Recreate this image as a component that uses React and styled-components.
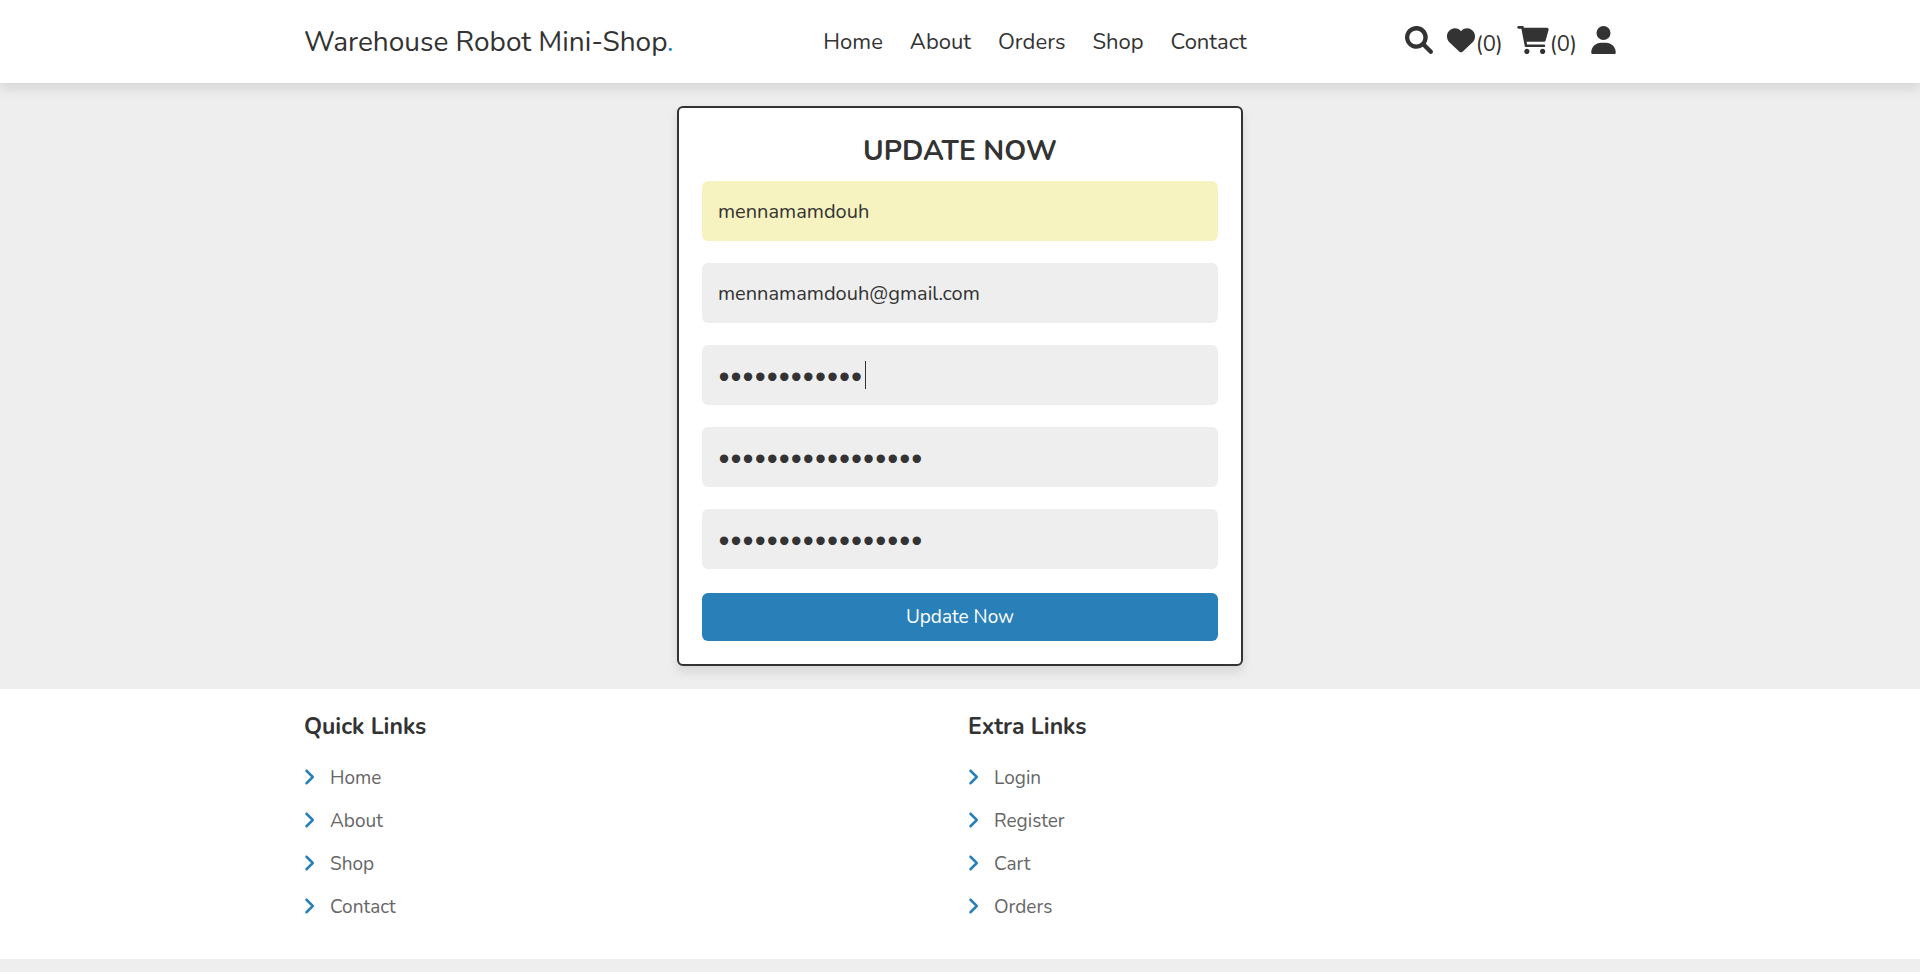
import React from "react";
import styled, { createGlobalStyle } from "styled-components";
import { FaHeart, FaUser } from "react-icons/fa6";

const GlobalStyle = createGlobalStyle`
  * { box-sizing: border-box; margin: 0; padding: 0; }
  body {
    background: #eee;
    color: #333;
    font-family: Nunito, Lato, "Noto Sans", sans-serif;
  }
  a { color: inherit; text-decoration: none; }
  ul { list-style: none; }
`;

const Container = styled.div`
  width: 100%;
  max-width: 1360px;
  margin: 0 auto;
  padding: 0 24px;
`;

const Header = styled.header`
  position: sticky;
  top: 0;
  z-index: 10;
  background: #fff;
  box-shadow: 0 6px 11px rgba(0, 0, 0, 0.1);
`;

const HeaderRow = styled(Container)`
  display: flex;
  align-items: center;
  justify-content: space-between;
  min-height: 83px;
`;

const Logo = styled.a`
  font-size: 28px;
  line-height: 38px;
  span { color: #2980b9; }
`;

const Nav = styled.nav`
  display: flex;
  gap: 27px;
  font-size: 22px;
  line-height: 32px;
`;

const Actions = styled.div`
  display: flex;
  align-items: center;
  gap: 14px;
  padding-left: 8px;
  line-height: 32px;
`;

const Action = styled.a`
  display: flex;
  align-items: center;
  gap: 1px;
  font-size: 22px;
  svg {
    display: block;
    flex: none;
    width: ${(p) => p.$iconWidth || 28}px;
    height: 28px;
    margin-bottom: 3px;
  }
  span { padding-top: 4px; }
`;

const Main = styled.main`
  padding: 23px 24px;
`;

const Card = styled.form`
  max-width: 566px;
  margin: 0 auto;
  padding: 23px;
  background: #fff;
  border: 2px solid #333;
  border-radius: 6px;
  box-shadow: 0 6px 11px rgba(0, 0, 0, 0.1);
`;

const CardTitle = styled.h1`
  padding-top: 1px;
  margin-bottom: 11px;
  font-size: 28px;
  line-height: 38px;
  font-weight: 700;
  text-align: center;
  text-transform: uppercase;
`;

const Fields = styled.div`
  display: flex;
  flex-direction: column;
  gap: 22px;
`;

const FieldBox = styled.div`
  position: relative;
`;

const Field = styled.input`
  display: block;
  width: 100%;
  height: 60px;
  padding: 0 16px;
  border: 0;
  outline: 0;
  border-radius: 6px;
  background: ${(p) => (p.$filled ? "#f7f3c0" : "#eee")};
  color: #333;
  font-family: inherit;
  font-size: ${(p) => (p.type === "password" ? 23 : 20)}px;
`;

const Caret = styled.span`
  position: absolute;
  top: 16px;
  left: 163px;
  width: 1px;
  height: 28px;
  background: #333;
`;

const Submit = styled.button`
  display: block;
  width: 100%;
  height: 48px;
  margin-top: 24px;
  border: 0;
  border-radius: 6px;
  background: #2980b9;
  color: #fff;
  font-family: inherit;
  font-size: 19px;
  cursor: pointer;
`;

const Footer = styled.footer`
  background: #fff;
  padding: 22px 0 30px;
`;

const FooterGrid = styled(Container)`
  display: grid;
  grid-template-columns: 1fr 1fr;
  gap: 16px;
`;

const FooterTitle = styled.h2`
  margin-bottom: 14px;
  font-size: 23px;
  line-height: 32px;
  font-weight: 700;
`;

const FooterLink = styled.a`
  display: flex;
  align-items: center;
  gap: 16px;
  padding: 8px 0;
  color: #666;
  font-size: 19px;
  line-height: 27px;
  svg { color: #2980b9; width: 10px; height: 20px; margin-bottom: 3px; }
`;

const SearchIcon = () => (
  <svg viewBox="0 0 512 512" fill="currentColor" aria-hidden="true">
    <path d="M500.3 443.7l-119.7-119.7c27.22-40.41 40.65-90.9 33.46-144.7C401.8 87.79 326.8 13.32 235.2 1.723C99.01-15.51-15.51 99.01 1.724 235.2c11.6 91.64 86.08 166.7 177.6 178.9c53.8 7.189 104.3-6.236 144.7-33.46l119.7 119.7c15.62 15.62 40.95 15.62 56.57 0C515.9 484.7 515.9 459.3 500.3 443.7zM79.1 208c0-70.58 57.42-128 128-128s128 57.42 128 128c0 70.58-57.42 128-128 128S79.1 278.6 79.1 208z" />
  </svg>
);

const CartIcon = () => (
  <svg viewBox="0 0 576 512" fill="currentColor" aria-hidden="true">
    <path d="M96 0C107.5 0 117.4 8.19 119.6 19.51L121.1 32H541.8C562.1 32 578.3 52.25 572.6 72.66L518.6 264.7C514.7 278.5 502.1 288 487.8 288H170.7L179.9 336H488C501.3 336 512 346.7 512 360C512 373.3 501.3 384 488 384H159.1C148.5 384 138.6 375.8 136.4 364.5L76.14 48H24C10.75 48 0 37.25 0 24C0 10.75 10.75 0 24 0H96zM128 464C128 437.5 149.5 416 176 416C202.5 416 224 437.5 224 464C224 490.5 202.5 512 176 512C149.5 512 128 490.5 128 464zM512 464C512 490.5 490.5 512 464 512C437.5 512 416 490.5 416 464C416 437.5 437.5 416 464 416C490.5 416 512 437.5 512 464z" />
  </svg>
);

const AngleIcon = () => (
  <svg viewBox="0 0 256 512" fill="currentColor" aria-hidden="true">
    <path d="M64 448c-8.188 0-16.38-3.125-22.62-9.375c-12.5-12.5-12.5-32.75 0-45.25L178.8 256L41.38 118.6c-12.5-12.5-12.5-32.75 0-45.25s32.75-12.5 45.25 0l160 160c12.5 12.5 12.5 32.75 0 45.25l-160 160C80.38 444.9 72.19 448 64 448z" />
  </svg>
);

const navLinks = ["Home", "About", "Orders", "Shop", "Contact"];
const fields = [
  { label: "Username", type: "text", value: "mennamamdouh", filled: true },
  { label: "Email", type: "email", value: "mennamamdouh@gmail.com" },
  { label: "Old password", type: "password", value: "mennamamdouh", active: true },
  { label: "New password", type: "password", value: "mennamamdouh12345" },
  { label: "Confirm new password", type: "password", value: "mennamamdouh12345" },
];
const footerColumns = [
  { title: "Quick Links", links: ["Home", "About", "Shop", "Contact"] },
  { title: "Extra Links", links: ["Login", "Register", "Cart", "Orders"] },
];

export default function App() {
  return (
    <>
      <GlobalStyle />
      <Header>
        <HeaderRow>
          <Logo href="#home">Warehouse Robot Mini-Shop<span>.</span></Logo>
          <Nav>
            {navLinks.map((name) => <a key={name} href={`#${name}`}>{name}</a>)}
          </Nav>
          <Actions>
            <Action href="#search" aria-label="Search"><SearchIcon /></Action>
            <Action href="#wishlist"><FaHeart /><span>(0)</span></Action>
            <Action href="#cart" $iconWidth={32}><CartIcon /><span>(0)</span></Action>
            <Action href="#account" aria-label="Account" $iconWidth={25}><FaUser /></Action>
          </Actions>
        </HeaderRow>
      </Header>
      <Main>
        <Card onSubmit={(e) => e.preventDefault()}>
          <CardTitle>Update now</CardTitle>
          <Fields>
            {fields.map(({ label, type, value, filled, active }) => (
              <FieldBox key={label}>
                <Field $filled={filled} type={type} aria-label={label} defaultValue={value} />
                {active && <Caret />}
              </FieldBox>
            ))}
          </Fields>
          <Submit type="submit">Update Now</Submit>
        </Card>
      </Main>
      <Footer>
        <FooterGrid>
          {footerColumns.map(({ title, links }) => (
            <section key={title}>
              <FooterTitle>{title}</FooterTitle>
              <ul>
                {links.map((name) => (
                  <li key={name}><FooterLink href={`#${name}`}><AngleIcon />{name}</FooterLink></li>
                ))}
              </ul>
            </section>
          ))}
        </FooterGrid>
      </Footer>
    </>
  );
}
